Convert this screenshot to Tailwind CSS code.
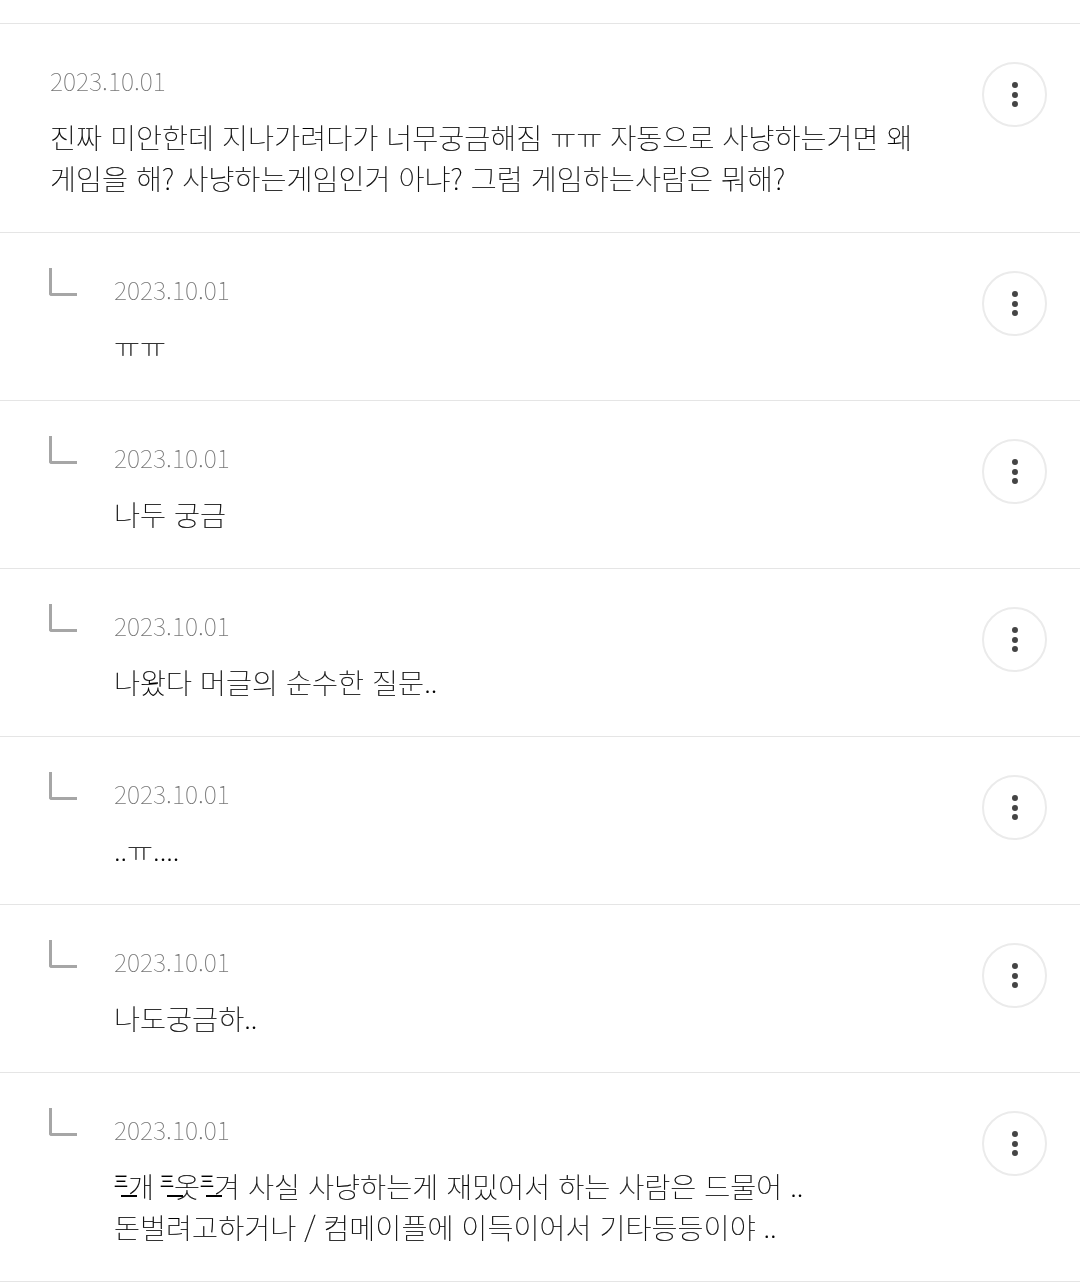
<!DOCTYPE html>
<html lang="ko">
<head>
    <meta charset="UTF-8">
    <meta name="viewport" content="width=device-width, initial-scale=1.0">
    <title>Comments</title>
    <script src="https://cdn.jsdelivr.net/npm/@tailwindcss/browser@4"></script>
</head>
<body class="bg-white font-['Noto_Sans_CJK_KR',sans-serif] font-thin text-black">
    <div class="h-[23px]"></div>
    <ul class="border-t border-[#e5e5e5] will-change-transform">
        <li class="flex justify-between border-b border-[#e5e5e5] h-[209px] pl-[50px] pr-[33px] pt-[38px]">
            <div class="w-[880px]">
                <p class="text-[25px] leading-[42px] text-[#777] -mt-[3px]">2023.10.01</p>
                <p class="text-[28.3px] leading-[41px] mt-[15px] break-keep [-webkit-text-stroke:0.2px_#000]">진짜 미안한데 지나가려다가 너무궁금해짐 ㅠㅠ 자동으로 사냥하는거면 왜 게임을 해? 사냥하는게임인거 아냐? 그럼 게임하는사람은 뭐해?</p>
            </div>
            <button class="flex h-[65px] w-[65px] shrink-0 flex-col items-center justify-center gap-[3.5px] rounded-full border-2 border-[#ebebeb]">
                <span class="h-[6px] w-[6px] rounded-full bg-[#444]"></span>
                <span class="h-[6px] w-[6px] rounded-full bg-[#444]"></span>
                <span class="h-[6px] w-[6px] rounded-full bg-[#444]"></span>
            </button>
        </li>
        <li class="flex justify-between border-b border-[#e5e5e5] h-[168px] pl-[50px] pr-[33px] pt-[38px]">
            <div class="flex">
                <div class="h-[28px] w-[28px] shrink-0 rounded-bl-[3px] border-b-[3px] border-l-[3px] border-[#a6a6a6] -mt-[3px] -ml-px"></div>
                <div class="ml-[37px] w-[820px]">
                    <p class="text-[25px] leading-[42px] text-[#777] -mt-[3px]">2023.10.01</p>
                    <p class="text-[28.3px] leading-[41px] mt-[15px] [-webkit-text-stroke:0.2px_#000]">ㅠㅠ</p>
                </div>
            </div>
            <button class="flex h-[65px] w-[65px] shrink-0 flex-col items-center justify-center gap-[3.5px] rounded-full border-2 border-[#ebebeb]">
                <span class="h-[6px] w-[6px] rounded-full bg-[#444]"></span>
                <span class="h-[6px] w-[6px] rounded-full bg-[#444]"></span>
                <span class="h-[6px] w-[6px] rounded-full bg-[#444]"></span>
            </button>
        </li>
        <li class="flex justify-between border-b border-[#e5e5e5] h-[168px] pl-[50px] pr-[33px] pt-[38px]">
            <div class="flex">
                <div class="h-[28px] w-[28px] shrink-0 rounded-bl-[3px] border-b-[3px] border-l-[3px] border-[#a6a6a6] -mt-[3px] -ml-px"></div>
                <div class="ml-[37px] w-[820px]">
                    <p class="text-[25px] leading-[42px] text-[#777] -mt-[3px]">2023.10.01</p>
                    <p class="text-[28.3px] leading-[41px] mt-[15px] [-webkit-text-stroke:0.2px_#000]">나두 궁금</p>
                </div>
            </div>
            <button class="flex h-[65px] w-[65px] shrink-0 flex-col items-center justify-center gap-[3.5px] rounded-full border-2 border-[#ebebeb]">
                <span class="h-[6px] w-[6px] rounded-full bg-[#444]"></span>
                <span class="h-[6px] w-[6px] rounded-full bg-[#444]"></span>
                <span class="h-[6px] w-[6px] rounded-full bg-[#444]"></span>
            </button>
        </li>
        <li class="flex justify-between border-b border-[#e5e5e5] h-[168px] pl-[50px] pr-[33px] pt-[38px]">
            <div class="flex">
                <div class="h-[28px] w-[28px] shrink-0 rounded-bl-[3px] border-b-[3px] border-l-[3px] border-[#a6a6a6] -mt-[3px] -ml-px"></div>
                <div class="ml-[37px] w-[820px]">
                    <p class="text-[25px] leading-[42px] text-[#777] -mt-[3px]">2023.10.01</p>
                    <p class="text-[28.3px] leading-[41px] mt-[15px] [-webkit-text-stroke:0.2px_#000]">나왔다 머글의 순수한 질문..</p>
                </div>
            </div>
            <button class="flex h-[65px] w-[65px] shrink-0 flex-col items-center justify-center gap-[3.5px] rounded-full border-2 border-[#ebebeb]">
                <span class="h-[6px] w-[6px] rounded-full bg-[#444]"></span>
                <span class="h-[6px] w-[6px] rounded-full bg-[#444]"></span>
                <span class="h-[6px] w-[6px] rounded-full bg-[#444]"></span>
            </button>
        </li>
        <li class="flex justify-between border-b border-[#e5e5e5] h-[168px] pl-[50px] pr-[33px] pt-[38px]">
            <div class="flex">
                <div class="h-[28px] w-[28px] shrink-0 rounded-bl-[3px] border-b-[3px] border-l-[3px] border-[#a6a6a6] -mt-[3px] -ml-px"></div>
                <div class="ml-[37px] w-[820px]">
                    <p class="text-[25px] leading-[42px] text-[#777] -mt-[3px]">2023.10.01</p>
                    <p class="text-[28.3px] leading-[41px] mt-[15px] [-webkit-text-stroke:0.2px_#000]">..ㅠ....</p>
                </div>
            </div>
            <button class="flex h-[65px] w-[65px] shrink-0 flex-col items-center justify-center gap-[3.5px] rounded-full border-2 border-[#ebebeb]">
                <span class="h-[6px] w-[6px] rounded-full bg-[#444]"></span>
                <span class="h-[6px] w-[6px] rounded-full bg-[#444]"></span>
                <span class="h-[6px] w-[6px] rounded-full bg-[#444]"></span>
            </button>
        </li>
        <li class="flex justify-between border-b border-[#e5e5e5] h-[168px] pl-[50px] pr-[33px] pt-[38px]">
            <div class="flex">
                <div class="h-[28px] w-[28px] shrink-0 rounded-bl-[3px] border-b-[3px] border-l-[3px] border-[#a6a6a6] -mt-[3px] -ml-px"></div>
                <div class="ml-[37px] w-[820px]">
                    <p class="text-[25px] leading-[42px] text-[#777] -mt-[3px]">2023.10.01</p>
                    <p class="text-[28.3px] leading-[41px] mt-[15px] [-webkit-text-stroke:0.2px_#000]">나도궁금하..</p>
                </div>
            </div>
            <button class="flex h-[65px] w-[65px] shrink-0 flex-col items-center justify-center gap-[3.5px] rounded-full border-2 border-[#ebebeb]">
                <span class="h-[6px] w-[6px] rounded-full bg-[#444]"></span>
                <span class="h-[6px] w-[6px] rounded-full bg-[#444]"></span>
                <span class="h-[6px] w-[6px] rounded-full bg-[#444]"></span>
            </button>
        </li>
        <li class="flex justify-between border-b border-[#e5e5e5] h-[209px] pl-[50px] pr-[33px] pt-[38px]">
            <div class="flex">
                <div class="h-[28px] w-[28px] shrink-0 rounded-bl-[3px] border-b-[3px] border-l-[3px] border-[#a6a6a6] -mt-[3px] -ml-px"></div>
                <div class="ml-[37px] w-[820px]">
                    <p class="text-[25px] leading-[42px] text-[#777] -mt-[3px]">2023.10.01</p>
                    <p class="text-[28.3px] leading-[41px] mt-[15px] [-webkit-text-stroke:0.2px_#000]"><span class="relative inline-block h-[1em] w-[14px]"><span class="absolute left-0 top-0 text-[14px] leading-[20px] font-medium">三</span><span class="absolute left-[7px] top-[25px] h-[2px] w-[16px] bg-black"></span></span>개<span class="relative inline-block h-[1em] w-[20px]"><span class="absolute left-[6px] top-0 text-[14px] leading-[20px] font-medium">三</span><span class="absolute left-[13px] top-[25px] h-[2px] w-[16px] bg-black"></span></span>옷<span class="relative inline-block h-[1em] w-[14px]"><span class="absolute left-0 top-0 text-[14px] leading-[20px] font-medium">三</span><span class="absolute left-[6px] top-[25px] h-[2px] w-[16px] bg-black"></span></span>겨 사실 사냥하는게 재밌어서 하는 사람은 드물어 ..<br>돈벌려고하거나 / 컴메이플에 이득이어서 기타등등이야 ..</p>
                </div>
            </div>
            <button class="flex h-[65px] w-[65px] shrink-0 flex-col items-center justify-center gap-[3.5px] rounded-full border-2 border-[#ebebeb]">
                <span class="h-[6px] w-[6px] rounded-full bg-[#444]"></span>
                <span class="h-[6px] w-[6px] rounded-full bg-[#444]"></span>
                <span class="h-[6px] w-[6px] rounded-full bg-[#444]"></span>
            </button>
        </li>
    </ul>
</body>
</html>
